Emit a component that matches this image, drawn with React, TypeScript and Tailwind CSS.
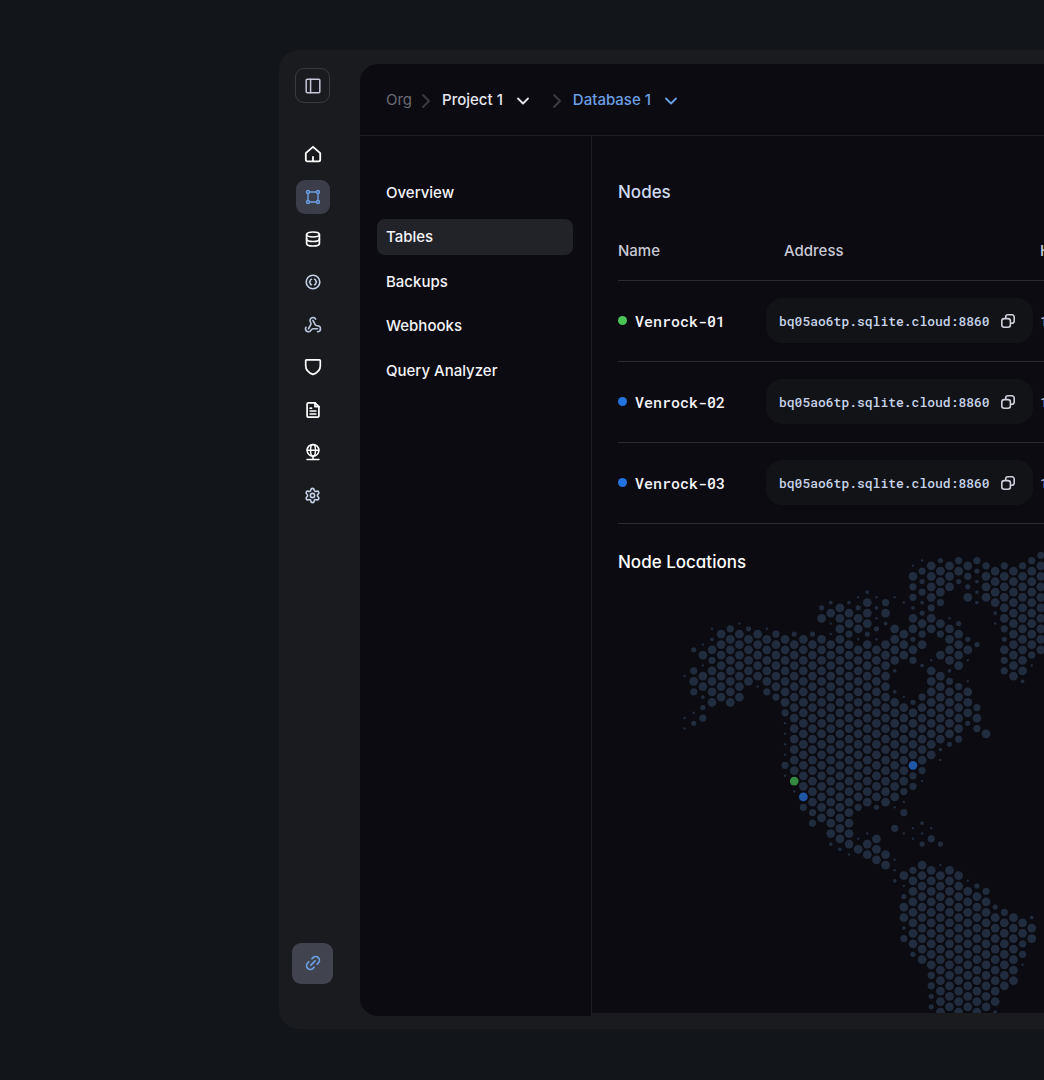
import type { ReactNode } from "react";
import { ChevronDown, ChevronRight, Link2, Settings, Webhook } from "lucide-react";

type Size = "F" | "l" | "m" | "s" | "t";

const RADII: Record<Size, number> = { F: 4.4, l: 3.6, m: 2.6, s: 1.9, t: 1.2 };

/* One entry per column of the hexagonal grid: "18m" is one medium dot in
   half-row 18, "22-26" a run of full dots in every second half-row. */
const MAP_COLUMNS: string[] = [
  "23t 31t 33t",
  "18m 22l 24F 26l 30t 32m",
  "17t 19F 21t 23-25 27s 29m 31l",
  "14t 16s 18F 20l 22-28",
  "15-27",
  "14l 16-28",
  "13t 15-27",
  "14m 16-24",
  "15-23 25t",
  "14t 16-24 26l",
  "15l 17-25 27l",
  "16-28 30l 32t 34t 36t 38t 40l 42t",
  "15m 17-41 45t",
  "16-44 48l",
  "15m 17-47 49l 51l",
  "10m 12F 16-50",
  "9s 11F 13t 15t 17-53 55s",
  "10-14 16-54 56s",
  "9s 11-13 15l 17-55 57t",
  "8t 10m 12-14 16t 18-46 48l 54t 56F",
  "7s 9-13 15m 17-47 53t 55-57",
  "8t 10s 12t 14m 16t 18-46 48m 54-58",
  "9l 11F 13s 17-47 57-59",
  "8t 14-20 22s 26s 28-46 48t 52l 58t 60t 62s",
  "9t 15-19 27t 29-43 45l 47t 49l 53t 61F 63t 65m 67-69 71s 73l",
  "2t 4F 6l 8l 10s 12-14 16m 18F 20l 28m 30-38 42l 44l 52t 54t 60l 62-74 76m",
  "1t 3l 5m 7l 9s 11m 13F 15l 17F 21s 27l 29-39 41l 43t 51s 53t 55m 59-77",
  "2-8 10l 12-14 20t 22-38 52t 54l 60-78 80l 82l 84m 86m",
  "1m 3-7 9l 13F 15l 19F 23-35 37s 39t 55m 59t 61-87",
  "2-6 12t 14-20 22s 24l 26-34 36m 60-86",
  "1l 3F 5m 13m 15-21 25l 27-33 35l 61-87",
  "2F 4l 6m 8F 16m 18F 20t 24t 26-30 32m 62t 64-86",
  "1l 3m 5s 7s 9s 17m 29l 31F 33l 63m 65-87",
  "2l 4-8 34F 64l 66-86",
  "3-9 11s 13t 67m 69-85 87s",
  "2l 4-12 14l 16m 18F 20l 22l 68l 70-82",
  "3-23 69-81",
  "2l 4-22 24s 70-72 74l 76l 78t",
  "1l 3-17 19l 21t 69s 71-73",
  "0l 2-18",
];

const MARKERS = [
  { col: 12, row: 43, color: "#348a41" },
  { col: 13, row: 46, color: "#1f57a6" },
  { col: 25, row: 40, color: "#1f57a6" },
];

const dotX = (col: number) => 66.6 + col * 9.135;
const dotY = (row: number) => 31.3 + row * 5.25;

function expand(column: string) {
  const dots: { row: number; size: Size }[] = [];
  for (const token of column.split(" ")) {
    if (token.includes("-")) {
      const [from, to] = token.split("-").map(Number);
      for (let row = from; row <= to; row += 2) dots.push({ row, size: "F" });
    } else {
      dots.push({ row: parseInt(token, 10), size: token.slice(-1) as Size });
    }
  }
  return dots;
}

function WorldMap() {
  return (
    <svg width="440" height="489" viewBox="0 0 440 489" className="block max-w-none" role="img" aria-label="Map of node locations">
      <g fill="#222c3f">
        {MAP_COLUMNS.flatMap((column, col) =>
          expand(column)
            .filter((d) => !MARKERS.some((m) => m.col === col && m.row === d.row))
            .map((d) => <circle key={`${col}-${d.row}`} cx={dotX(col)} cy={dotY(d.row)} r={RADII[d.size]} />),
        )}
      </g>
      {MARKERS.map((m) => (
        <circle key={`${m.col}-${m.row}`} cx={dotX(m.col)} cy={dotY(m.row)} r="4.4" fill={m.color} />
      ))}
    </svg>
  );
}

function Glyph({ children, weight = 1.6 }: { children: ReactNode; weight?: number }) {
  return (
    <svg width="18" height="18" viewBox="0 0 18 18" fill="none" stroke="currentColor" strokeWidth={weight} strokeLinecap="round" strokeLinejoin="round" aria-hidden="true">
      {children}
    </svg>
  );
}

const PanelIcon = () => (
  <Glyph weight={1.5}>
    <rect x="2.2" y="2.2" width="13.6" height="13.6" rx="1" />
    <path d="M6.6 2.2v13.6" />
  </Glyph>
);
const HomeIcon = () => (
  <Glyph weight={1.8}>
    <path d="M1.8 8.2 9 1.8l7.2 6.4v6.6a1.6 1.6 0 0 1-1.6 1.6H3.4a1.6 1.6 0 0 1-1.6-1.6Z" />
    <path d="M9 16v-4.2" />
  </Glyph>
);
const NodesIcon = () => (
  <Glyph weight={1.4}>
    <circle cx="4" cy="4" r="1.5" />
    <circle cx="14" cy="4" r="1.5" />
    <circle cx="4" cy="14" r="1.5" />
    <circle cx="14" cy="14" r="1.5" />
    <path d="M5.5 4h7M5.5 14h7M4 5.5v7M14 5.5v7" />
  </Glyph>
);
const DatabaseIcon = () => (
  <Glyph weight={1.7}>
    <ellipse cx="9" cy="4.5" rx="6.4" ry="2.5" />
    <path d="M2.6 4.5v9c0 1.4 2.9 2.5 6.4 2.5s6.4-1.1 6.4-2.5v-9" />
    <path d="M2.6 9c0 1.4 2.9 2.5 6.4 2.5s6.4-1.1 6.4-2.5" />
  </Glyph>
);
const FunctionIcon = () => (
  <Glyph weight={1.6}>
    <circle cx="9" cy="9" r="6.8" />
    <path d="M7.5 6.2C6 6.2 6.6 8.3 5.5 9c1.1.7.5 2.8 2 2.8M10.5 6.2c1.5 0 .9 2.1 2 2.8-1.1.7-.5 2.8-2 2.8" />
  </Glyph>
);
const ShieldIcon = () => (
  <Glyph weight={1.7}>
    <path d="M2.6 1.8h12.8c.5 0 .9.4.9.9v5c0 4.2-2.7 7-7.3 8.7C4.4 14.7 1.7 11.9 1.7 7.7v-5c0-.5.4-.9.9-.9Z" />
  </Glyph>
);
const DocumentIcon = () => (
  <Glyph weight={1.7}>
    <path d="M11 1.8H4.4a1.3 1.3 0 0 0-1.3 1.3v11.8a1.3 1.3 0 0 0 1.3 1.3h9.2a1.3 1.3 0 0 0 1.3-1.3V5.7Z" />
    <path d="M11 1.8v3.9h3.9M6.2 7.2h1.3M6.2 10h5.6M6.2 13h5.6" />
  </Glyph>
);
const GlobeIcon = () => (
  <Glyph weight={1.5}>
    <circle cx="9" cy="7.3" r="5.9" />
    <ellipse cx="9" cy="7.3" rx="2.5" ry="5.9" />
    <path d="M3.1 7.3h11.8M9 13.2v3.2M3 16.4h12" />
  </Glyph>
);
const CopyIcon = () => (
  <svg width="14" height="14" viewBox="0 0 14 14" fill="none" stroke="currentColor" strokeWidth="1.6" strokeLinejoin="round" aria-hidden="true">
    <rect x=".8" y="4.6" width="8.6" height="8.6" rx="2.4" />
    <path d="M4.7 4.6V3A2.2 2.2 0 0 1 6.9.8H11A2.2 2.2 0 0 1 13.2 3v4.1A2.2 2.2 0 0 1 11 9.3H9.4" />
  </svg>
);

const RAIL: { label: string; icon: ReactNode; className: string }[] = [
  { label: "Home", icon: <HomeIcon />, className: "text-white" },
  { label: "Nodes", icon: <NodesIcon />, className: "bg-[#3b3d48] text-[#6b9fe4]" },
  { label: "Databases", icon: <DatabaseIcon />, className: "text-white" },
  { label: "Functions", icon: <FunctionIcon />, className: "text-[#c3d0e8]" },
  { label: "Webhooks", icon: <Webhook size={18} strokeWidth={2.2} />, className: "text-[#b7c3dc]" },
  { label: "Security", icon: <ShieldIcon />, className: "text-white" },
  { label: "Logs", icon: <DocumentIcon />, className: "text-white" },
  { label: "Network", icon: <GlobeIcon />, className: "text-white" },
  { label: "Settings", icon: <Settings size={17} strokeWidth={2.3} />, className: "text-[#c3d0e8]" },
];

const MENU = ["Overview", "Tables", "Backups", "Webhooks", "Query Analyzer"];

const NODES = [
  { name: "Venrock-01", dot: "bg-[#4ac659]" },
  { name: "Venrock-02", dot: "bg-[#2273e0]" },
  { name: "Venrock-03", dot: "bg-[#2273e0]" },
];

function Rail() {
  return (
    <aside className="flex w-[81px] shrink-0 flex-col items-center pt-[18px] pr-[14px] pb-[45px]">
      <button aria-label="Toggle sidebar" className="flex h-[35px] w-[35px] items-center justify-center rounded-[9px] border border-[#393b40] text-[#c5c6da]">
        <PanelIcon />
      </button>
      <nav className="mt-[34px] flex h-[375px] flex-col justify-between">
        {RAIL.map((item) => (
          <button key={item.label} aria-label={item.label} className={`flex h-[34px] w-[34px] items-center justify-center rounded-[9px] ${item.className}`}>
            {item.icon}
          </button>
        ))}
      </nav>
      <button aria-label="Connect" className="mt-auto flex h-[41px] w-[41px] items-center justify-center rounded-[9px] bg-[#41434f] text-[#6b9fe4]">
        <Link2 size={18} strokeWidth={2.3} className="-rotate-45" />
      </button>
    </aside>
  );
}

function Breadcrumb() {
  return (
    <header className="flex h-[72px] items-center rounded-tl-[18px] border-b border-[#1e1f24] bg-[#0b0b11] pt-0.5 pl-[26px] text-[15px]">
      <a href="#org" className="text-[#6c6c74]">Org</a>
      <ChevronRight size={24} strokeWidth={1.8} className="ml-0.5 text-[#3c3d43]" />
      <button className="ml-1 flex items-center gap-2.5 font-medium text-[#e6e6ee]">
        Project 1
        <ChevronDown size={20} strokeWidth={2.2} />
      </button>
      <ChevronRight size={24} strokeWidth={1.8} className="ml-3 text-[#3c3d43]" />
      <button className="ml-1 flex items-center gap-2.5 font-medium text-[#6b9fe4]">
        Database 1
        <ChevronDown size={20} strokeWidth={2.2} />
      </button>
    </header>
  );
}

function NodeTable() {
  return (
    <table className="mt-[15px] w-[480px] table-fixed border-collapse text-left">
      <thead>
        <tr className="h-[59px] border-b border-[#2b2c32] text-[15px] text-[#c9c9d6]">
          <th className="w-[148px] p-0 pt-0.5 font-medium">Name</th>
          <th className="w-[274px] p-0 pt-0.5 pl-[18px] font-medium">Address</th>
          <th className="p-0 pt-0.5 font-medium">H</th>
        </tr>
      </thead>
      <tbody>
        {NODES.map((node) => (
          <tr key={node.name} className="h-[81px] border-b border-[#2b2c32]">
            <td className="p-0">
              <div className="flex items-center gap-2 font-['Roboto_Mono','DejaVu_Sans_Mono',monospace] text-[15px] font-medium text-[#f4f4f8]">
                <span className={`h-[9px] w-[9px] rounded-full ${node.dot}`} />
                <span className="pt-0.5">{node.name}</span>
              </div>
            </td>
            <td className="p-0">
              <div className="flex h-[45px] w-[267px] items-center justify-between rounded-2xl bg-[#121316] pr-[18px] pl-[13px] font-['Roboto_Mono','DejaVu_Sans_Mono',monospace] text-[13px] font-medium text-[#c6d3ea]">
                <span className="pt-0.5">bq05ao6tp.sqlite.cloud:8860</span>
                <button aria-label={`Copy address of ${node.name}`} className="text-[#d0d0dc]">
                  <CopyIcon />
                </button>
              </div>
            </td>
            <td className="p-0 pt-0.5 font-['Roboto_Mono','DejaVu_Sans_Mono',monospace] text-[13px] text-[#c9c9d6]">1</td>
          </tr>
        ))}
      </tbody>
    </table>
  );
}

export default function App() {
  return (
    <div className="flex min-h-screen items-start overflow-hidden bg-[#12161a] py-[50px] pl-[279px] font-['Inter',sans-serif]">
      <div className="flex min-w-0 flex-1 rounded-l-[20px] bg-[#1a1b1e]">
        <Rail />
        <div className="flex min-w-0 flex-1 flex-col pt-[14px] pb-[13px]">
          <Breadcrumb />
          <div className="flex flex-1">
            <nav className="w-[232px] shrink-0 rounded-bl-[18px] border-r border-[#1e1f24] bg-[#0b0b11] pt-[38px] pr-[18px] pl-[17px]">
              <ul className="flex h-[214px] flex-col justify-between">
                {MENU.map((item) => (
                  <li key={item}>
                    <a
                      href={`#${item}`}
                      className={`flex h-9 items-center rounded-lg pt-0.5 pl-[9px] text-[15px] font-medium text-[#f4f4f8] ${item === "Tables" ? "bg-[#222329]" : ""}`}
                    >
                      {item}
                    </a>
                  </li>
                ))}
              </ul>
            </nav>
            <main className="mb-[3px] min-w-0 flex-1 overflow-hidden bg-[#0b0b11] pt-[42px] pl-[26px]">
              <h2 className="text-[17px] leading-7 font-medium text-[#cfdcf2]">Nodes</h2>
              <NodeTable />
              <section className="grid">
                <div className="[grid-area:1/1]">
                  <WorldMap />
                </div>
                <h2 className="pt-6 text-[17px] leading-7 font-medium text-white [font-feature-settings:'cv11'] [grid-area:1/1]">Node Locations</h2>
              </section>
            </main>
          </div>
        </div>
      </div>
    </div>
  );
}
